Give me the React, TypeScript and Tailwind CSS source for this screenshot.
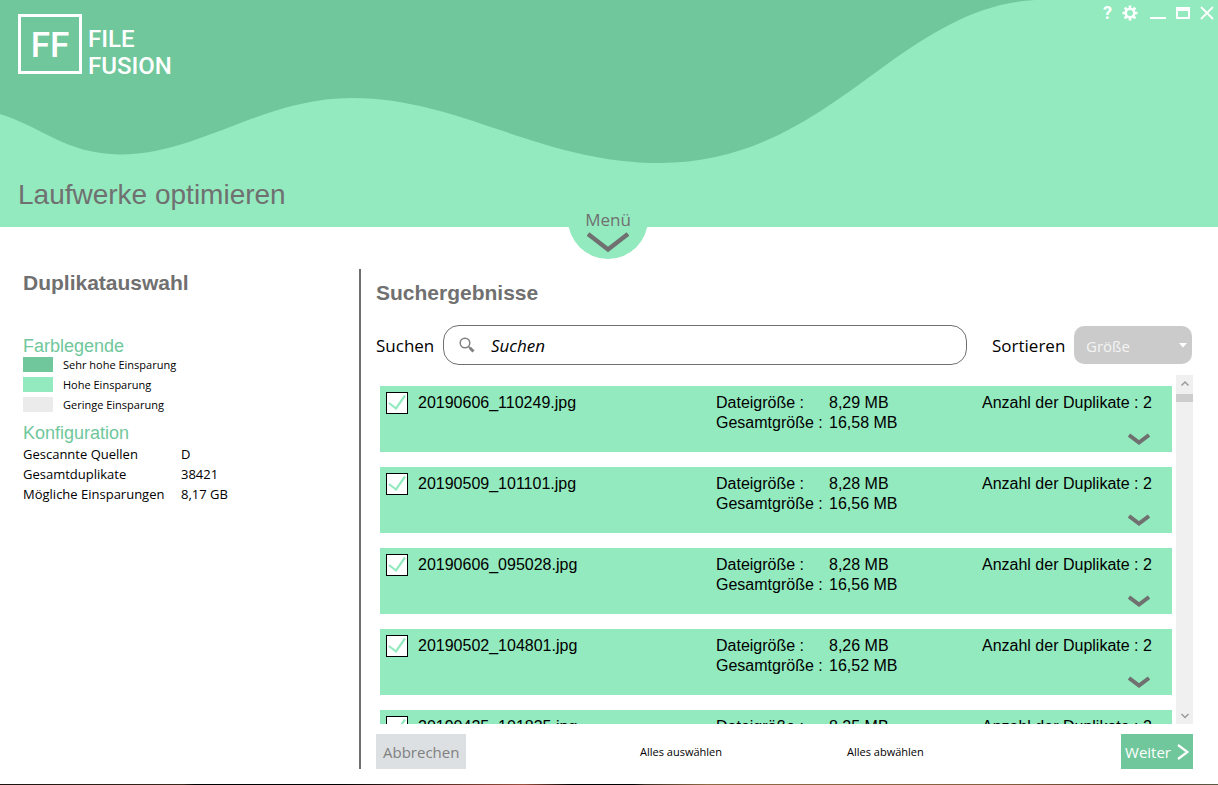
import { useState } from 'react';

const uiFont = "font-['Open_Sans','Noto_Sans',sans-serif]";

const legend = [
  { label: 'Sehr hohe Einsparung', color: 'bg-[#70c79b]' },
  { label: 'Hohe Einsparung', color: 'bg-[#93eabf]' },
  { label: 'Geringe Einsparung', color: 'bg-[#ebebeb]' },
];

const config = [
  { label: 'Gescannte Quellen', value: 'D' },
  { label: 'Gesamtduplikate', value: '38421' },
  { label: 'Mögliche Einsparungen', value: '8,17 GB' },
];

const initialFiles = [
  { name: '20190606_110249.jpg', size: '8,29 MB', total: '16,58 MB', count: 2, selected: true },
  { name: '20190509_101101.jpg', size: '8,28 MB', total: '16,56 MB', count: 2, selected: true },
  { name: '20190606_095028.jpg', size: '8,28 MB', total: '16,56 MB', count: 2, selected: true },
  { name: '20190502_104801.jpg', size: '8,26 MB', total: '16,52 MB', count: 2, selected: true },
  { name: '20190425_101835.jpg', size: '8,25 MB', total: '16,50 MB', count: 2, selected: true },
];

type FileEntry = (typeof initialFiles)[number];

function Logo() {
  return (
    <div className="flex items-start gap-1.5 font-['Roboto',sans-serif] text-white">
      <div className="flex h-15 w-16 items-center justify-center border-3 border-white pt-0.5 text-[35px] leading-none font-medium">
        FF
      </div>
      <div className="pt-3 text-2xl leading-[27px] font-medium">
        FILE
        <br />
        FUSION
      </div>
    </div>
  );
}

function WindowControls() {
  return (
    <div className="flex h-[26px] items-center gap-2.5 pr-1 text-white">
      <button type="button" aria-label="Hilfe" className="font-['Roboto',sans-serif] text-lg leading-none font-bold">
        ?
      </button>
      <button type="button" aria-label="Einstellungen">
        <svg width="16" height="16" viewBox="0 0 16 16" fill="none" stroke="currentColor">
          <circle cx="8" cy="8" r="4.3" strokeWidth="2.6" />
          <path
            d="M8 .5v2.5M8 13v2.5M.5 8H3M13 8h2.5M2.7 2.7l1.8 1.8M11.5 11.5l1.8 1.8M2.7 13.3l1.8-1.8M11.5 4.5l1.8-1.8"
            strokeWidth="2.6"
          />
        </svg>
      </button>
      <button type="button" aria-label="Minimieren" className="ml-0.5">
        <svg width="16" height="12" viewBox="0 0 16 12" fill="currentColor">
          <path d="M0 10h16v2H0z" />
        </svg>
      </button>
      <button type="button" aria-label="Maximieren">
        <svg width="14" height="12" viewBox="0 0 14 12" fill="currentColor" fillRule="evenodd">
          <path d="M0 0h14v12H0zM2 4v6h10V4z" />
        </svg>
      </button>
      <button type="button" aria-label="Schließen">
        <svg width="14" height="14" viewBox="0 0 14 14" stroke="currentColor" strokeWidth="1.8">
          <path d="M1 1l12 12M13 1L1 13" />
        </svg>
      </button>
    </div>
  );
}

function Header() {
  return (
    <header className="relative h-[227px] shrink-0 bg-[#93eabf]">
      <svg
        className="absolute inset-0 h-full w-full"
        viewBox="0 0 1218 227"
        preserveAspectRatio="none"
        fill="#70c79b"
        aria-hidden="true"
      >
        <path d="M0 0V114C40 126 66 154 120 154.500C200 154 262 98 352 98C460 98 540 163 660 163C760 163 826 108 886 65C936 29 980 3 1035 0Z" />
      </svg>
      <div className="relative flex h-full flex-col justify-between">
        <div className="flex items-start justify-between">
          <div className="pt-3.5 pl-[18px]">
            <Logo />
          </div>
          <WindowControls />
        </div>
        <h1 className="pb-3.5 pl-[18px] text-[28px] leading-9 text-[#707070]">Laufwerke optimieren</h1>
      </div>
      <button
        type="button"
        className={`absolute -bottom-8 left-1/2 -ml-px flex h-20 w-20 -translate-x-1/2 flex-col items-center justify-end rounded-full bg-[#93eabf] pb-[5px] text-[#707070] ${uiFont}`}
      >
        <span className="text-[17px] leading-6">Menü</span>
        <svg width="42" height="22" viewBox="0 0 42 22" fill="none" stroke="currentColor" strokeWidth="4.500">
          <path d="M1 2L21 17.500L41 2" />
        </svg>
      </button>
    </header>
  );
}

function Sidebar() {
  return (
    <aside className={`w-[361px] shrink-0 border-r-2 border-[#707070] pl-[23px] ${uiFont}`}>
      <h2 className="font-['Liberation_Sans',Arial,sans-serif] text-[21px] leading-7 font-bold text-[#707070]">
        Duplikatauswahl
      </h2>

      <h3 className="mt-[39px] font-['Liberation_Sans',Arial,sans-serif] text-lg leading-5 text-[#70c79b]">
        Farblegende
      </h3>
      <ul className="text-[11px] leading-5 text-black">
        {legend.map((item) => (
          <li key={item.label} className="flex h-5 items-start gap-2.5">
            <span className={`mt-px h-[15px] w-[30px] ${item.color}`} />
            <span className="leading-[18px]">{item.label}</span>
          </li>
        ))}
      </ul>

      <h3 className="mt-[7px] font-['Liberation_Sans',Arial,sans-serif] text-lg leading-5 text-[#70c79b]">
        Konfiguration
      </h3>
      <dl className="mt-px grid grid-cols-[158px_1fr] text-[13px] leading-5 text-black">
        {config.map((item) => (
          <div key={item.label} className="contents">
            <dt>{item.label}</dt>
            <dd>{item.value}</dd>
          </div>
        ))}
      </dl>
    </aside>
  );
}

function Toolbar() {
  return (
    <div className={`flex items-center text-[17px] text-black ${uiFont}`}>
      <label htmlFor="search" className="w-[67px] shrink-0 pt-0.5">
        Suchen
      </label>
      <div className="flex h-10 flex-1 items-center gap-4 rounded-2xl border border-[#707070] pl-[15px]">
        <svg width="16" height="16" viewBox="0 0 16 16" fill="none" stroke="#808080">
          <circle cx="6" cy="6" r="4.800" strokeWidth="1.500" />
          <path d="M9.500 9.500L11 11" strokeWidth="1.500" />
          <path d="M10.800 10.800L14.500 14.500" strokeWidth="3" />
        </svg>
        <input
          id="search"
          type="text"
          placeholder="Suchen"
          className="min-w-0 flex-1 pt-0.5 italic outline-none placeholder:text-black"
        />
      </div>
      <label htmlFor="sort" className="ml-[25px] w-[82px] shrink-0 pt-0.5">
        Sortieren
      </label>
      <div className="relative mr-px">
        <select
          id="sort"
          className="h-[38px] w-[118px] appearance-none rounded-[10px] bg-[#cbcbcb] px-3 pt-0.5 text-[15px] text-[#f4f4f4]"
        >
          <option>Größe</option>
          <option>Name</option>
        </select>
        <svg
          className="pointer-events-none absolute top-[17px] right-[5px]"
          width="8"
          height="5"
          viewBox="0 0 8 5"
          fill="#fff"
        >
          <path d="M0 0h8L4 4.500z" />
        </svg>
      </div>
    </div>
  );
}

function FileRow({ file, onToggle }: { file: FileEntry; onToggle: () => void }) {
  return (
    <li className="flex h-[66px] shrink-0 bg-[#93eabf] pt-1.5 pl-1.5 text-base leading-5 text-black">
      <label className="flex min-w-0 flex-1 items-start gap-2.5">
        <span className="relative h-[22px] w-[22px] shrink-0">
          <input
            type="checkbox"
            checked={file.selected}
            onChange={onToggle}
            className="peer block h-full w-full appearance-none border border-black bg-white"
          />
          <svg
            className="pointer-events-none invisible absolute inset-0 peer-checked:visible"
            width="22"
            height="22"
            viewBox="0 0 22 22"
            fill="none"
            stroke="#93eabf"
            strokeWidth="2.200"
          >
            <path d="M3 11L10 16.500L19 3.500" />
          </svg>
        </span>
        <span className="truncate pt-px">{file.name}</span>
      </label>
      <dl className="grid w-[266px] shrink-0 grid-cols-[113px_1fr] content-start pt-px">
        <dt>Dateigröße :</dt>
        <dd>{file.size}</dd>
        <dt>Gesamtgröße :</dt>
        <dd>{file.total}</dd>
      </dl>
      <div className="flex w-[190px] shrink-0 flex-col justify-between pt-px pb-1.5">
        <span>Anzahl der Duplikate : {file.count}</span>
        <button type="button" aria-label="Duplikate anzeigen" className="mr-[22px] self-end">
          <svg width="22" height="13" viewBox="0 0 22 13" fill="none" stroke="#707070" strokeWidth="4">
            <path d="M1 2L11 9.500L21 2" />
          </svg>
        </button>
      </div>
    </li>
  );
}

function ScrollBar() {
  return (
    <div className="flex w-[17px] shrink-0 flex-col bg-[#f0f0f0]" aria-hidden="true">
      <svg width="17" height="19" viewBox="0 0 17 19" fill="none" stroke="#9a9a9a" strokeWidth="1.500">
        <path d="M5.500 10.500L9 7L12.500 10.500" />
      </svg>
      <div className="h-2 bg-[#cdcdcd]" />
      <svg className="mt-auto" width="17" height="17" viewBox="0 0 17 17" fill="none" stroke="#9a9a9a" strokeWidth="1.500">
        <path d="M5.500 7L9 10.500L12.500 7" />
      </svg>
    </div>
  );
}

export default function App() {
  const [files, setFiles] = useState(initialFiles);

  const setAll = (selected: boolean) => setFiles(files.map((f) => ({ ...f, selected })));
  const toggle = (name: string) =>
    setFiles(files.map((f) => (f.name === name ? { ...f, selected: !f.selected } : f)));

  return (
    <div className="flex h-screen flex-col bg-white font-['Liberation_Sans',Arial,sans-serif]">
      <Header />
      <main className="flex min-h-0 flex-1 pt-[42px] pr-[25px] pb-[15px]">
        <Sidebar />
        <section className="flex min-w-0 flex-1 flex-col pt-2.5 pl-[15px]">
          <h2 className="mb-[18px] text-[21px] leading-7 font-bold text-[#707070]">Suchergebnisse</h2>
          <Toolbar />

          <div className="mt-2.5 flex min-h-0 flex-1 gap-1 pl-1">
            <ul className="flex flex-1 flex-col gap-[15px] overflow-y-auto pt-[11px] [scrollbar-width:none]">
              {files.map((file) => (
                <FileRow key={file.name} file={file} onToggle={() => toggle(file.name)} />
              ))}
            </ul>
            <ScrollBar />
          </div>

          <div className={`mt-2.5 grid h-[35px] shrink-0 grid-cols-[264fr_207fr_346fr] text-[11px] ${uiFont}`}>
            <button type="button" className="justify-self-start bg-[#dce0e3] px-[7px] pt-0.5 text-[15px] text-[#808080]">
              Abbrechen
            </button>
            <button type="button" className="justify-self-start pt-0.5" onClick={() => setAll(true)}>
              Alles auswählen
            </button>
            <div className="flex justify-between">
              <button type="button" className="pt-0.5" onClick={() => setAll(false)}>
                Alles abwählen
              </button>
              <button type="button" className="flex items-center gap-1.5 bg-[#70c79b] px-1 text-[15px] text-white">
                <span className="pt-0.5">Weiter</span>
                <svg width="12" height="16" viewBox="0 0 12 16" fill="none" stroke="currentColor" strokeWidth="2.200">
                  <path d="M1 1L10.500 8L1 15" />
                </svg>
              </button>
            </div>
          </div>
        </section>
      </main>
      <div className="h-px shrink-0 bg-[linear-gradient(to_right,#1c130e_0%,#3a271b_15%,#000_16%,#000_28%,#3a1f1a_33%,#99503e_43%,#000_47%,#000_52%,#3a2e22_53%,#8e6a45_58%,#85603f_82%,#5a3828_94%,#5b5b45_100%)]" />
    </div>
  );
}
